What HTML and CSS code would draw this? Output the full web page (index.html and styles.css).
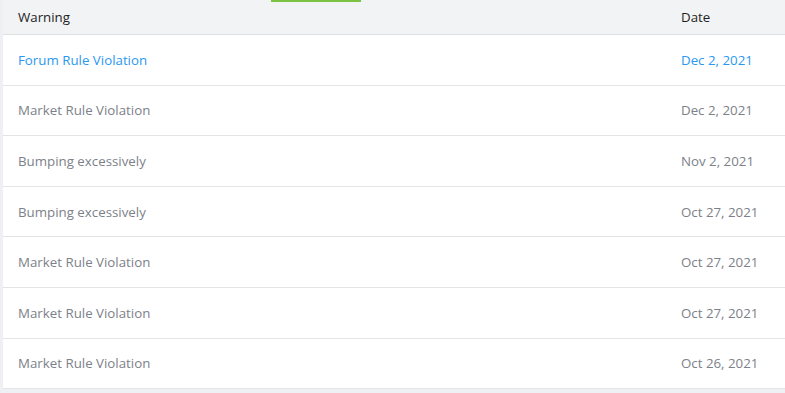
FILE: index.html
```html
<!DOCTYPE html>
<html lang="en">
<head>
    <meta charset="UTF-8">
    <meta name="viewport" content="width=device-width, initial-scale=1.0">
    <title>Warnings</title>
    <link rel="stylesheet" href="styles.css">
</head>
<body>
    <div class="page">
        <div class="tab-marker"></div>
        <table class="warnings">
            <thead>
                <tr>
                    <th>Warning</th>
                    <th class="date-col">Date</th>
                </tr>
            </thead>
            <tbody>
                <tr class="active">
                    <td>Forum Rule Violation</td>
                    <td>Dec 2, 2021</td>
                </tr>
                <tr>
                    <td>Market Rule Violation</td>
                    <td>Dec 2, 2021</td>
                </tr>
                <tr>
                    <td>Bumping excessively</td>
                    <td>Nov 2, 2021</td>
                </tr>
                <tr>
                    <td>Bumping excessively</td>
                    <td>Oct 27, 2021</td>
                </tr>
                <tr>
                    <td>Market Rule Violation</td>
                    <td>Oct 27, 2021</td>
                </tr>
                <tr>
                    <td>Market Rule Violation</td>
                    <td>Oct 27, 2021</td>
                </tr>
                <tr>
                    <td>Market Rule Violation</td>
                    <td>Oct 26, 2021</td>
                </tr>
            </tbody>
        </table>
    </div>
</body>
</html>
```

FILE: styles.css
```css
body {
    margin: 0;
    padding: 0;
    background-color: #eef0f3;
    font-family: "Open Sans", "Noto Sans", sans-serif;
    font-size: 13.3px;
}
.page {
    position: relative;
    margin-left: 3px;
    height: 393px;
    background-color: #eef0f3;
}
/* barra verde de la pestaña activa */
.tab-marker {
    position: absolute;
    top: 0;
    left: 268px;
    width: 90px;
    height: 2px;
    background-color: #7cc242;
}
.warnings {
    width: 100%;
    border-collapse: collapse;
    background-color: #ffffff;
}
.warnings th {
    height: 34px;
    padding: 0 15px;
    text-align: left;
    font-weight: normal;
    color: #1e1e1e;
    background-color: #f2f3f5;
    border-bottom: 1px solid #dfe0e2;
}
.warnings th.date-col {
    width: 89px;
}
.warnings td {
    height: 49.6px;
    padding: 0 15px;
    color: #7c8189;
    border-bottom: 1px solid #e3e4e6;
}
.warnings tr.active td {
    color: #2b98f0;
}
```
